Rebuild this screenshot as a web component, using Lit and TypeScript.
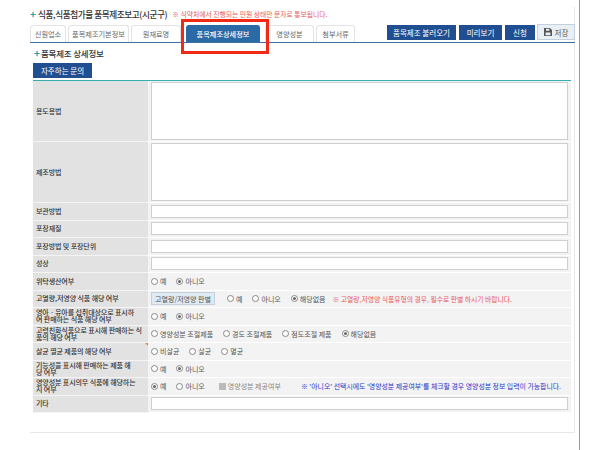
import { LitElement, html, css } from "lit";
import { customElement } from "lit/decorators.js";

const radio = (label: string, on = false) => html`<label class="opt"><span class="radio ${on ? "on" : ""}"></span>${label}</label>`;

@customElement("app-root")
export class AppRoot extends LitElement {
  static styles = css`
    :host { display: block; width: 600px; height: 450px; background: #fff; overflow: hidden; font-family: "Noto Sans CJK KR", "Liberation Sans", sans-serif; color: #333; position: relative; }
    .rail { width: 580px; height: 450px; box-sizing: border-box; border-right: 1px solid #999; padding: 7px 4px 0 30px; }
    .panel { width: 545px; height: 426px; box-sizing: border-box; border-right: 1px solid #e8e8e8; border-bottom: 1px solid #e8e8e8; }
    .title { display: flex; align-items: center; height: 13px; white-space: nowrap; }
    .plus { color: #17a6a6; font-weight: 700; font-size: 10px; line-height: 10px; width: 7px; flex: none; }
    .title b { font-size: 8.6px; font-weight: 500; color: #333; letter-spacing: -0.4px; margin-left: 1px; }
    .title .warn { font-size: 6.8px; letter-spacing: 0; color: #e8595a; margin-left: 5px; }
    .tabs { display: flex; align-items: flex-end; height: 22px; border-bottom: 1px solid #3f6f9f; margin-right: -1px; box-sizing: content-box; }
    .tab { box-sizing: border-box; height: 17px; display: flex; align-items: center; justify-content: center; border: 1px solid #e4e4e4; border-bottom: none; border-radius: 3px 3px 0 0; font-size: 7.2px; color: #666; margin-right: 2px; flex: none; }
    .tab.active { background: #2a6aa6; color: #fff; font-weight: 500; border-color: #2a6aa6; margin: 0 5px 0 3px; }
    .actions { margin-left: auto; display: flex; gap: 3px; align-items: flex-end; padding-bottom: 2px; }
    .btn { height: 15px; background: #1f4f91; color: #fff; font-size: 7.5px; display: flex; align-items: center; justify-content: center; box-sizing: border-box; }
    .btn.save { background: #e9f0f5; color: #555; border: 1px solid #c4d0dc; height: 16px; gap: 3px; margin-left: -1px; }
    .btn.save svg { width: 8px; height: 8px; }
    .sub { display: flex; align-items: center; height: 13px; margin: 3px 0 0 4px; }
    .sub b { font-size: 8.5px; font-weight: 500; color: #333; letter-spacing: -0.2px; }
    .faq { width: 59px; height: 15px; margin: 4px 0 0 3px; }
    .grid { margin: 2px 3px 0 3px; border-top: 1px solid #35aeb0; display: grid; grid-template-columns: 115px 1fr; grid-template-rows: 61px 61px repeat(12, 17.5px); }
    .l { background: #e2e2e2; border-bottom: 1px solid #f4f4f4; box-sizing: border-box; padding: 0 2px 0 3px; font-size: 7px; line-height: 7px; letter-spacing: -0.1px; color: #333; font-weight: 500; display: flex; align-items: center; position: relative; white-space: nowrap; }
    .l span { display: block; }
    .l.flag::after { content: ""; position: absolute; right: 0; top: 0; border-top: 3px solid #e8862a; border-left: 3px solid transparent; }
    .v { background: #f3f3f3; border-bottom: 1px solid #fff; box-sizing: border-box; padding: 0 3px; display: flex; align-items: center; font-size: 7px; color: #555; white-space: nowrap; min-width: 0; }
    .box { width: 417px; height: 13px; box-sizing: border-box; background: #fff; border: 1px solid #cfcfcf; }
    .box.ta { height: 58px; }
    .opt { display: inline-flex; align-items: center; gap: 2px; margin-right: 10px; }
    .radio { width: 7px; height: 7px; border-radius: 50%; box-sizing: border-box; border: 1px solid #888; background: #fff; display: inline-block; position: relative; }
    .radio.on::after { content: ""; position: absolute; inset: 1px; border-radius: 50%; background: #666; }
    .judge { height: 13px; width: 64px; margin-right: 12px; background: #dfeaf2; border: 1px solid #c4d0dc; box-sizing: border-box; display: flex; align-items: center; justify-content: center; font-size: 7px; color: #555; }
    .red { color: #e8595a; margin-left: -3px; font-size: 6.8px; }
    .blue { color: #2a34c8; margin-left: 20px; font-size: 6.9px; }
    .chk { display: inline-flex; align-items: center; gap: 2px; color: #888; margin-left: 4px; font-size: 7px; }
    .chk i { width: 7px; height: 7px; background: #bbb; display: inline-block; }
    .mark { position: absolute; left: 181px; top: 19px; width: 88px; height: 35px; box-sizing: border-box; border: 3px solid #f02a14; }
  `;

  render() {
    const row = (l: unknown, v: unknown, flag = false) => html`<div class="l ${flag ? "flag" : ""}"><span>${l}</span></div><div class="v">${v}</div>`;
    const box = html`<div class="box"></div>`;
    return html`
      <div class="rail"><div class="panel">
        <div class="title"><span class="plus">+</span><b>식품,식품첨가물 품목제조보고(시군구)</b><span class="warn">※ 식약처에서 진행되는 민원 상태만 문자로 통보됩니다.</span></div>
        <div class="tabs">
          <div class="tab" style="width:36px">신원업소</div>
          <div class="tab" style="width:61px">품목제조기본정보</div>
          <div class="tab" style="width:50px">원재료명</div>
          <div class="tab active" style="width:74px">품목제조상세정보</div>
          <div class="tab" style="width:49px">영양성분</div>
          <div class="tab" style="width:39px">첨부서류</div>
          <div class="actions">
            <div class="btn" style="width:69px">품목제조 불러오기</div>
            <div class="btn" style="width:43px">미리보기</div>
            <div class="btn" style="width:30px">신청</div>
            <div class="btn save" style="width:38px"><svg viewBox="0 0 8 8"><path fill="#555" d="M0 0h6l2 2v6H0z"/><path fill="#e9f0f5" d="M2 0.8h3.4v2H2zM1.6 4.6h4.8v2.6H1.6z"/></svg>저장</div>
          </div>
        </div>
        <div class="sub"><span class="plus">+</span><b>품목제조 상세정보</b></div>
        <div class="btn faq">자주하는 문의</div>
        <div class="grid">
          ${row("용도용법", html`<div class="box ta"></div>`)}
          ${row("제조방법", html`<div class="box ta"></div>`)}
          ${row("보관방법", box)}
          ${row("포장재질", box)}
          ${row("포장방법 및 포장단위", box)}
          ${row("성상", box)}
          ${row("위탁생산여부", html`${radio("예")}${radio("아니오", true)}`)}
          ${row("고열량,저영양 식품 해당 여부", html`<div class="judge">고열량/저영양 판별</div>${radio("예")}${radio("아니오")}${radio("해당없음", true)}<span class="red">※ 고열량,저영양 식품유형의 경우, 필수로 판별 하시기 바랍니다.</span>`)}
          ${row(html`영아ㆍ유아를 섭취대상으로 표시하<br />여 판매하는 식품 해당 여부`, html`${radio("예")}${radio("아니오", true)}`)}
          ${row(html`고령친화식품으로 표시해 판매하는 식<br />품의 해당 여부`, html`${radio("영양성분 조절제품")}${radio("경도 조절제품")}${radio("점도조절 제품")}${radio("해당없음", true)}`)}
          ${row("살균 멸균 제품의 해당 여부", html`${radio("비살균")}${radio("살균")}${radio("멸균")}`, true)}
          ${row(html`기능성을 표시해 판매하는 제품 해<br />당 여부`, html`${radio("예")}${radio("아니오", true)}`)}
          ${row(html`영양성분 표시의무 식품에 해당하는<br />지 여부`, html`${radio("예", true)}${radio("아니오")}<span class="chk"><i></i>영양성분 제공여부</span><span class="blue">※ '아니오' 선택시에도 '영양성분 제공여부'를 체크할 경우 영양성분 정보 입력이 가능합니다.</span>`)}
          ${row("기타", box)}
        </div>
      </div></div>
      <div class="mark"></div>
    `;
  }
}
